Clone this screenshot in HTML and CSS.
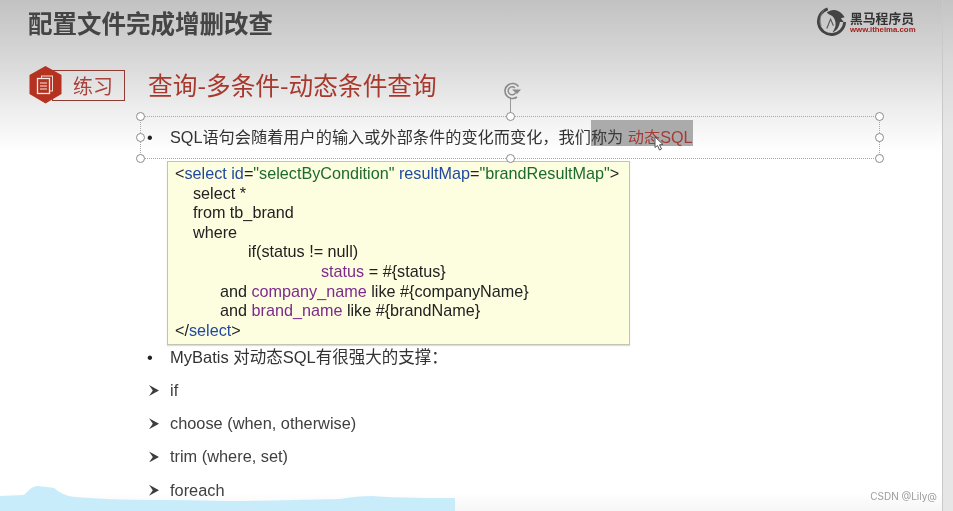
FILE: index.html
```html
<!DOCTYPE html>
<html lang="zh">
<head>
<meta charset="utf-8">
<title>配置文件完成增删改查</title>
<link rel="stylesheet" href="styles.css">
</head>
<body>
<div class="window">
  <main class="slide">
    <header class="top">
      <h1 class="heading">配置文件完成增删改查</h1>
      <div class="logo">
        <svg class="logo-mark" width="31" height="30" viewBox="0 0 32 32">
          <path d="M12 3 A14 14 0 1 0 30 17" fill="none" stroke="#444" stroke-width="3"/>
          <path d="M8 4 C4 9 3 15 5 21" fill="none" stroke="#777" stroke-width="1"/>
          <path d="M11 7 C17 2 25 4 30 12 L26 13 L29 17 L25 17 C24 23 21 27 17 28 C22 22 21 15 17 11 C15 9 12 9 11 7Z" fill="#444"/>
          <path d="M11 24 L15 14 L18 21" fill="none" stroke="#555" stroke-width="1.2"/>
        </svg>
        <div class="logo-text">
          <div class="logo-cn">黑马程序员</div>
          <div class="logo-url">www.itheima.com</div>
        </div>
      </div>
    </header>

    <section class="subhead">
      <div class="badge">
        <svg class="hex" width="33" height="38" viewBox="0 0 33 38">
          <polygon points="16.5,0 32.5,9 32.5,28 16.5,37.500 0.500,28 0.500,9" fill="#b4321f"/>
          <rect x="12.500" y="10" width="11" height="15" fill="none" stroke="#f3d9d3" stroke-width="1"/>
          <rect x="8.500" y="12.500" width="12" height="15" fill="#b4321f" stroke="#f7e9e6" stroke-width="1.300"/>
          <path d="M11 17h7M11 20h7M11 23h7" stroke="#f7e9e6" stroke-width="1.100"/>
        </svg>
        <div class="badge-box">练习</div>
      </div>
      <h2 class="subtitle">查询-多条件-动态条件查询</h2>
    </section>

    <section class="content">
      <div class="item item-first">
        <span class="dot">•</span>
        <p class="line line-hl">SQL语句会随着用户的输入或外部条件的变化而变化，我们<mark class="hl">称为 <span class="red">动态SQL</span></mark></p>

        <div class="selection">
          <i class="handle h-tl"></i><i class="handle h-tc"></i><i class="handle h-tr"></i>
          <i class="handle h-ml"></i><i class="handle h-mr"></i>
          <i class="handle h-bl"></i><i class="handle h-bc"></i><i class="handle h-br"></i>
          <i class="stem"></i>
          <svg class="rotate" width="20" height="20" viewBox="0 0 20 20">
            <path d="M16.500 5.500 A7.500 7.500 0 1 0 15 16" fill="none" stroke="#8a8a8a" stroke-width="1.600"/>
            <path d="M13 7 A4 4 0 1 0 13.500 12" fill="none" stroke="#8a8a8a" stroke-width="1.400"/>
            <path d="M10 8.500 L19 8.500 L15 13 Z" fill="#8a8a8a"/>
          </svg>
        </div>
        <svg class="cursor" width="12" height="16" viewBox="0 0 12 16">
          <path d="M1 1 L1 11.500 L3.500 9.500 L5.500 14 L7.500 13 L5.500 8.800 L9 8.500 Z" fill="#fff" stroke="#555" stroke-width="1"/>
        </svg>
      </div>

      <div class="code">
        <div class="c0">&lt;<span class="kw">select</span> <span class="kw">id</span>=<span class="str">"selectByCondition"</span> <span class="kw">resultMap</span>=<span class="str">"brandResultMap"</span>&gt;</div>
        <div class="c1">select *</div>
        <div class="c1">from tb_brand</div>
        <div class="c1">where</div>
        <div class="c3">if(status != null)</div>
        <div class="c4"><span class="col">status</span> = #{status}</div>
        <div class="c2">and <span class="col">company_name</span> like #{companyName}</div>
        <div class="c2">and <span class="col">brand_name</span> like #{brandName}</div>
        <div class="c0">&lt;/<span class="kw">select</span>&gt;</div>
      </div>

      <div class="item item-second">
        <span class="dot">•</span>
        <p class="line">MyBatis 对动态SQL有很强大的支撑：</p>
      </div>
      <ul class="tags">
        <li class="tag">if</li>
        <li class="tag">choose (when, otherwise)</li>
        <li class="tag">trim (where, set)</li>
        <li class="tag">foreach</li>
      </ul>
    </section>

    <svg class="wave" width="455" height="26" viewBox="0 0 455 26">
      <path d="M0 11 L24 10 C28 6 32 1 38 1 C44 2 50 2 54 3 C60 8 66 11 75 12 C100 14 125 15 150 15 C175 15 200 15 225 16 C260 16 300 15 340 14 C350 12 362 11 372 11 C400 13 430 13 455 13 L455 26 L0 26 Z" fill="#c9ecfa"/>
    </svg>
    <div class="watermark">CSDN @Lily@</div>
  </main>
  <aside class="strip"></aside>
</div>
</body>
</html>
```
FILE: styles.css
```css
* { box-sizing: border-box; }
html, body { margin: 0; height: 100%; overflow: hidden; background: #fff; }
body { font-family: "Liberation Sans", "Noto Sans CJK SC", sans-serif; }

.window { display: flex; width: 953px; height: 511px; }
.slide {
  position: relative;
  width: 942px;
  height: 511px;
  overflow: hidden;
  filter: blur(0.35px);
  background: linear-gradient(#c2c2c2 0, #d2d2d2 44px, #dcdcdc 70px, #ececec 105px, #fff 152px, #fff 492px, #f6f6f6 511px);
}
.strip { flex: 1; border-left: 1px solid #c9c9c9; background: linear-gradient(#c4c4c4 0, #d8d8d8 60px, #e6e6e6 130px, #e6e6e6 100%); }

.top {
  display: flex;
  justify-content: space-between;
  height: 44px;
  padding: 6px 27px 0 28px;
  border-bottom: 1px solid #d0d0d0;
}
.heading { margin: 0; font: 700 24.5px/34px "Noto Sans CJK SC", sans-serif; color: #454545; }
.logo { display: flex; align-items: center; gap: 3px; height: 30px; }
.logo-text { width: 65px; padding-top: 1px; }
.logo-cn { font: 700 12.8px/15px "Noto Sans CJK SC", sans-serif; color: #333; white-space: nowrap; }
.logo-url { font: 700 7.8px/9px "Liberation Sans", sans-serif; color: #a3211c; white-space: nowrap; }

.subhead { display: flex; align-items: center; height: 38px; margin: 22px 0 0 29px; }
.badge { position: relative; width: 96px; height: 38px; padding: 4px 0 0 23px; }
.hex { position: absolute; left: 0; top: 0; }
.badge-box {
  height: 31px;
  border: 1px solid #8e3b33;
  padding-left: 20px;
  font: 400 20px/29px "Noto Sans CJK SC", sans-serif;
  color: #a8423a;
}
.subtitle { margin: -2px 0 0 23px; font: 400 24.7px/36px "Noto Sans CJK SC", sans-serif; color: #a8382c; white-space: nowrap; }

.content { padding-left: 147px; color: #333; }
.item { position: relative; display: flex; height: 26px; font-size: 16.2px; line-height: 26px; }
.item-first { margin-top: 20px; }
.item-second { margin-top: -1px; font-size: 16.5px; }
.dot { width: 23px; color: #222; font-family: "Liberation Sans", sans-serif; }
.line { margin: 0; white-space: nowrap; }
.line-hl { margin-top: -4px; }
.hl { display: inline-block; padding: 8px 0 0; line-height: 18px; background: #ababab; color: #3a3a3a; }
.red { color: #a33b36; }

.selection {
  position: absolute;
  left: -7px;
  top: -8px;
  width: 740px;
  height: 43px;
  border: 1px dotted #a8a8a8;
}
.handle {
  position: absolute;
  width: 9px;
  height: 9px;
  border: 1.500px solid #8b8b8b;
  border-radius: 50%;
  background: #fff;
}
.h-tl { left: -5px; top: -5px; }
.h-tc { left: 365px; top: -5px; }
.h-tr { right: -5px; top: -5px; }
.h-ml { left: -5px; top: 16px; }
.h-mr { right: -5px; top: 16px; }
.h-bl { left: -5px; bottom: -5px; }
.h-bc { left: 365px; bottom: -5px; }
.h-br { right: -5px; bottom: -5px; }
.stem { position: absolute; left: 369px; top: -19px; width: 1px; height: 15px; background: #999; }
.rotate { position: absolute; left: 361px; top: -36px; }
.cursor { position: absolute; left: 507px; top: 12px; }

.code {
  width: 463px;
  height: 184px;
  margin: 11px 0 0 20px;
  padding: 2px 0 0 7px;
  border: 1px solid #c4c4b4;
  background: #fdfde0;
  box-shadow: 0 1px 1px #ddd;
  font-size: 16.2px;
  line-height: 19.6px;
  color: #222;
  white-space: nowrap;
}
.c1 { padding-left: 18px; }
.c2 { padding-left: 45px; }
.c3 { padding-left: 73px; }
.c4 { padding-left: 146px; }
.kw { color: #1f4aa0; }
.str { color: #1d6b2c; }
.col { color: #7d2a8c; }

.tags { list-style: none; margin: 4px 0 0; padding: 0 0 0 2px; }
.tag {
  display: flex;
  align-items: center;
  gap: 11px;
  height: 33.2px;
  font-size: 16.35px;
  color: #404040;
}
.tag::before {
  content: "";
  width: 10px;
  height: 11px;
  background: #3d3d3d;
  clip-path: polygon(0 0, 100% 50%, 0 100%, 38% 50%);
}

.wave { position: absolute; left: 0; bottom: 0; }
.watermark { position: absolute; right: 5px; bottom: 8px; font: 400 10px/14px "Inter", sans-serif; color: #9c9c9c; }
```
